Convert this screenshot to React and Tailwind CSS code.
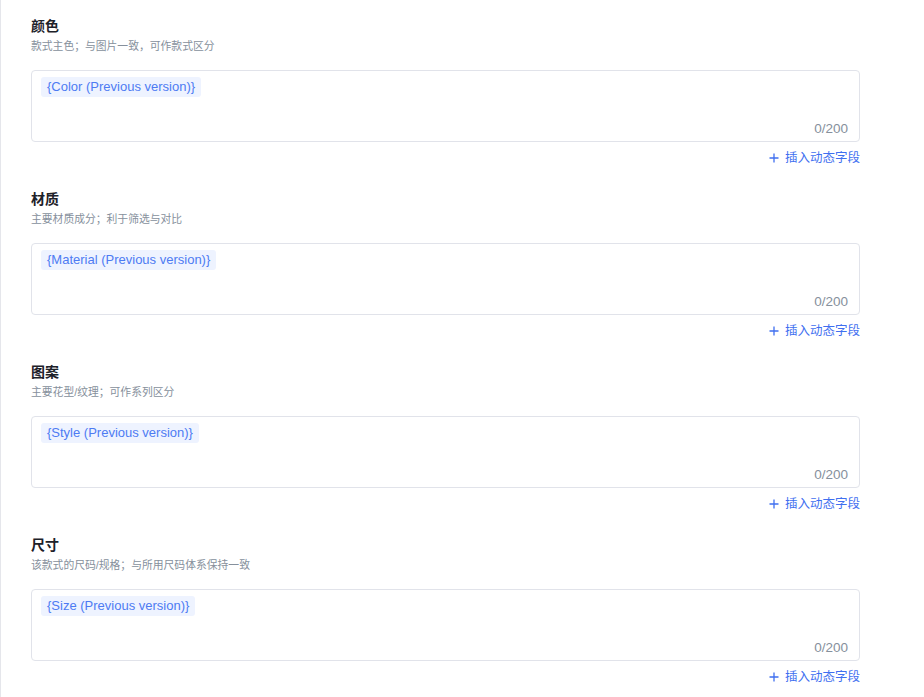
import React from 'react';

const fields = [
  { title: '颜色', hint: '款式主色；与图片一致，可作款式区分', token: '{Color (Previous version)}' },
  { title: '材质', hint: '主要材质成分；利于筛选与对比', token: '{Material (Previous version)}' },
  { title: '图案', hint: '主要花型/纹理；可作系列区分', token: '{Style (Previous version)}' },
  { title: '尺寸', hint: '该款式的尺码/规格；与所用尺码体系保持一致', token: '{Size (Previous version)}' },
];

const FieldBlock = ({ title, hint, token }) => (
  <section className="mb-[23px]">
    <h3 className="h-5 text-[14px] leading-5 font-semibold text-[#1d2129]">{title}</h3>
    <p className="mt-[2px] h-4 text-[10.8px] leading-4 text-[#86909c]">{hint}</p>
    <div className="relative mt-4 flex h-[72px] items-start rounded-[4px] border border-[#e1e3ea] bg-white px-[9px] pt-[6px]">
      <span className="flex h-5 items-center rounded-[3px] bg-[#eef3ff] px-[6px] text-[13px] text-[#4d7bf3]">
        {token}
      </span>
      <span className="absolute bottom-[2px] right-[11px] text-[13.5px] leading-5 text-[#86909c]">0/200</span>
    </div>
    <div className="mt-2 flex h-4 justify-end">
      <button className="flex items-center gap-[6px] text-[12.5px] leading-4 text-[#3f6ff0]">
        <svg width="10" height="10" viewBox="0 0 10 10" fill="none" stroke="currentColor" strokeWidth="1.3">
          <path d="M5 0.5v9M0.5 5h9" />
        </svg>
        插入动态字段
      </button>
    </div>
  </section>
);

export default function App() {
  return (
    <div
      className="min-h-screen border-l border-[#e5e6eb] bg-white"
      style={{ fontFamily: '"Liberation Sans", "Noto Sans CJK SC", sans-serif' }}
    >
      <div className="w-[859px] pl-[30px] pt-4">
        {fields.map((f) => (
          <FieldBlock key={f.title} {...f} />
        ))}
      </div>
    </div>
  );
}
